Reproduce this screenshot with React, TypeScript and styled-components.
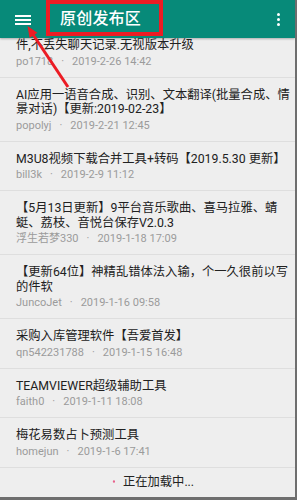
import React from "react";
import styled, { createGlobalStyle } from "styled-components";

const GlobalStyle = createGlobalStyle`
  html, body { margin: 0; padding: 0; background: #eeeeee; }
  * { box-sizing: border-box; }
`;

const FONT = `Roboto, "Noto Sans CJK SC", "Noto Sans", sans-serif`;

const Frame = styled.div`
  position: relative;
  width: 297px;
  height: 500px;
  overflow: hidden;
  background: #eeeeee;
  border-right: 2px solid #6e6e6e;
  border-bottom: 3px solid #6e6e6e;
  font-family: ${FONT};
  display: flex;
  flex-direction: column;
`;

const Toolbar = styled.header`
  position: relative;
  z-index: 2;
  flex: 0 0 38px;
  height: 38px;
  background: #078a79;
  box-shadow: 0 1px 2px rgba(0, 0, 0, 0.28);
  display: flex;
  align-items: center;
  padding: 0 0 0 15px;
`;

const MenuButton = styled.div`
  width: 16px;
  height: 10px;
  display: flex;
  flex-direction: column;
  justify-content: space-between;
  margin-top: 1px;
`;

const MenuBar = styled.span`
  display: block;
  height: 2px;
  background: #ffffff;
`;

const Title = styled.h1`
  margin: 0 0 0 29px;
  font-size: 16px;
  font-weight: 500;
  color: #ffffff;
  letter-spacing: 0.2px;
  flex: 1;
  line-height: 20px;
`;

const Kebab = styled.div`
  width: 3px;
  display: flex;
  flex-direction: column;
  gap: 2px;
  margin-right: 15px;
`;

const KebabDot = styled.span`
  width: 3px;
  height: 3px;
  border-radius: 50%;
  background: #ffffff;
`;

const List = styled.main`
  flex: 1;
  display: flex;
  flex-direction: column;
`;

const Row = styled.div<{ $cut?: boolean }>`
  padding: ${(p) => (p.$cut ? "0" : "10px")} 8px 8px 16px;
  border-bottom: 1px solid #dedede;
  display: flex;
  flex-direction: column;
  gap: 2px;
`;

const RowTitle = styled.div`
  font-size: 12.3px;
  line-height: 14.5px;
  color: #212121;
`;

const TitleLine = styled.span`
  display: block;
  white-space: nowrap;
`;

const Meta = styled.div`
  font-size: 11px;
  line-height: 14px;
  color: #9b9b9b;
  display: flex;
  align-items: center;
`;

const Sep = styled.span`
  margin: 0 8px;
`;

const Loading = styled.div`
  flex: 1;
  display: flex;
  align-items: center;
  justify-content: center;
  gap: 8px;
  padding-bottom: 2px;
  font-size: 12.3px;
  color: #222222;
`;

const Annotation = styled.div`
  position: absolute;
  left: 46px;
  top: 0;
  width: 117px;
  height: 36px;
  border: 4px solid #ec1c24;
  z-index: 3;
  pointer-events: none;
`;

const ArrowLayer = styled.svg`
  position: absolute;
  left: 0;
  top: 0;
  z-index: 3;
  pointer-events: none;
`;

type Item = { lines: string[]; author: string; date: string; cut?: boolean };

const items: Item[] = [
  { lines: ["件,不丢失聊天记录.无视版本升级"], author: "po1718", date: "2019-2-26 14:42", cut: true },
  {
    lines: ["AI应用一语音合成、识别、文本翻译(批量合成、情", "景对话)【更新:2019-02-23】"],
    author: "popolyj",
    date: "2019-2-21 12:45",
  },
  { lines: ["M3U8视频下载合并工具+转码【2019.5.30 更新】"], author: "bill3k", date: "2019-2-9 11:12" },
  {
    lines: ["【5月13日更新】9平台音乐歌曲、喜马拉雅、蜻", "蜓、荔枝、音悦台保存V2.0.3"],
    author: "浮生若梦330",
    date: "2019-1-18 17:09",
  },
  {
    lines: ["【更新64位】神精乱错体法入输，个一久很前以写", "的件软"],
    author: "JuncoJet",
    date: "2019-1-16 09:58",
  },
  { lines: ["采购入库管理软件【吾爱首发】"], author: "qn542231788", date: "2019-1-15 16:48" },
  { lines: ["TEAMVIEWER超级辅助工具"], author: "faith0", date: "2019-1-11 18:08" },
  { lines: ["梅花易数占卜预测工具"], author: "homejun", date: "2019-1-6 17:41" },
];

function Spinner() {
  return (
    <svg width="14" height="14" viewBox="0 0 14 14">
      <circle cx="13" cy="7.5" r="1.2" fill="#e8628c" />
    </svg>
  );
}

export default function App() {
  return (
    <>
      <GlobalStyle />
      <Frame>
        <Toolbar>
          <MenuButton>
            <MenuBar />
            <MenuBar />
            <MenuBar />
          </MenuButton>
          <Title>原创发布区</Title>
          <Kebab>
            <KebabDot />
            <KebabDot />
            <KebabDot />
          </Kebab>
        </Toolbar>
        <List>
          {items.map((it, i) => (
            <Row key={i} $cut={it.cut}>
              <RowTitle>
                {it.lines.map((l, j) => (
                  <TitleLine key={j}>{l}</TitleLine>
                ))}
              </RowTitle>
              <Meta>
                <span>{it.author}</span>
                <Sep>·</Sep>
                <span>{it.date}</span>
              </Meta>
            </Row>
          ))}
          <Loading>
            <Spinner />
            <span>正在加载中...</span>
          </Loading>
        </List>
        <Annotation />
        <ArrowLayer width="297" height="500" viewBox="0 0 297 500">
          <line x1="32" y1="33" x2="68" y2="87" stroke="#ec1c24" strokeWidth="3" />
          <polygon points="27.5,26 29.6,38 37.4,32.8" fill="#ec1c24" />
        </ArrowLayer>
      </Frame>
    </>
  );
}
